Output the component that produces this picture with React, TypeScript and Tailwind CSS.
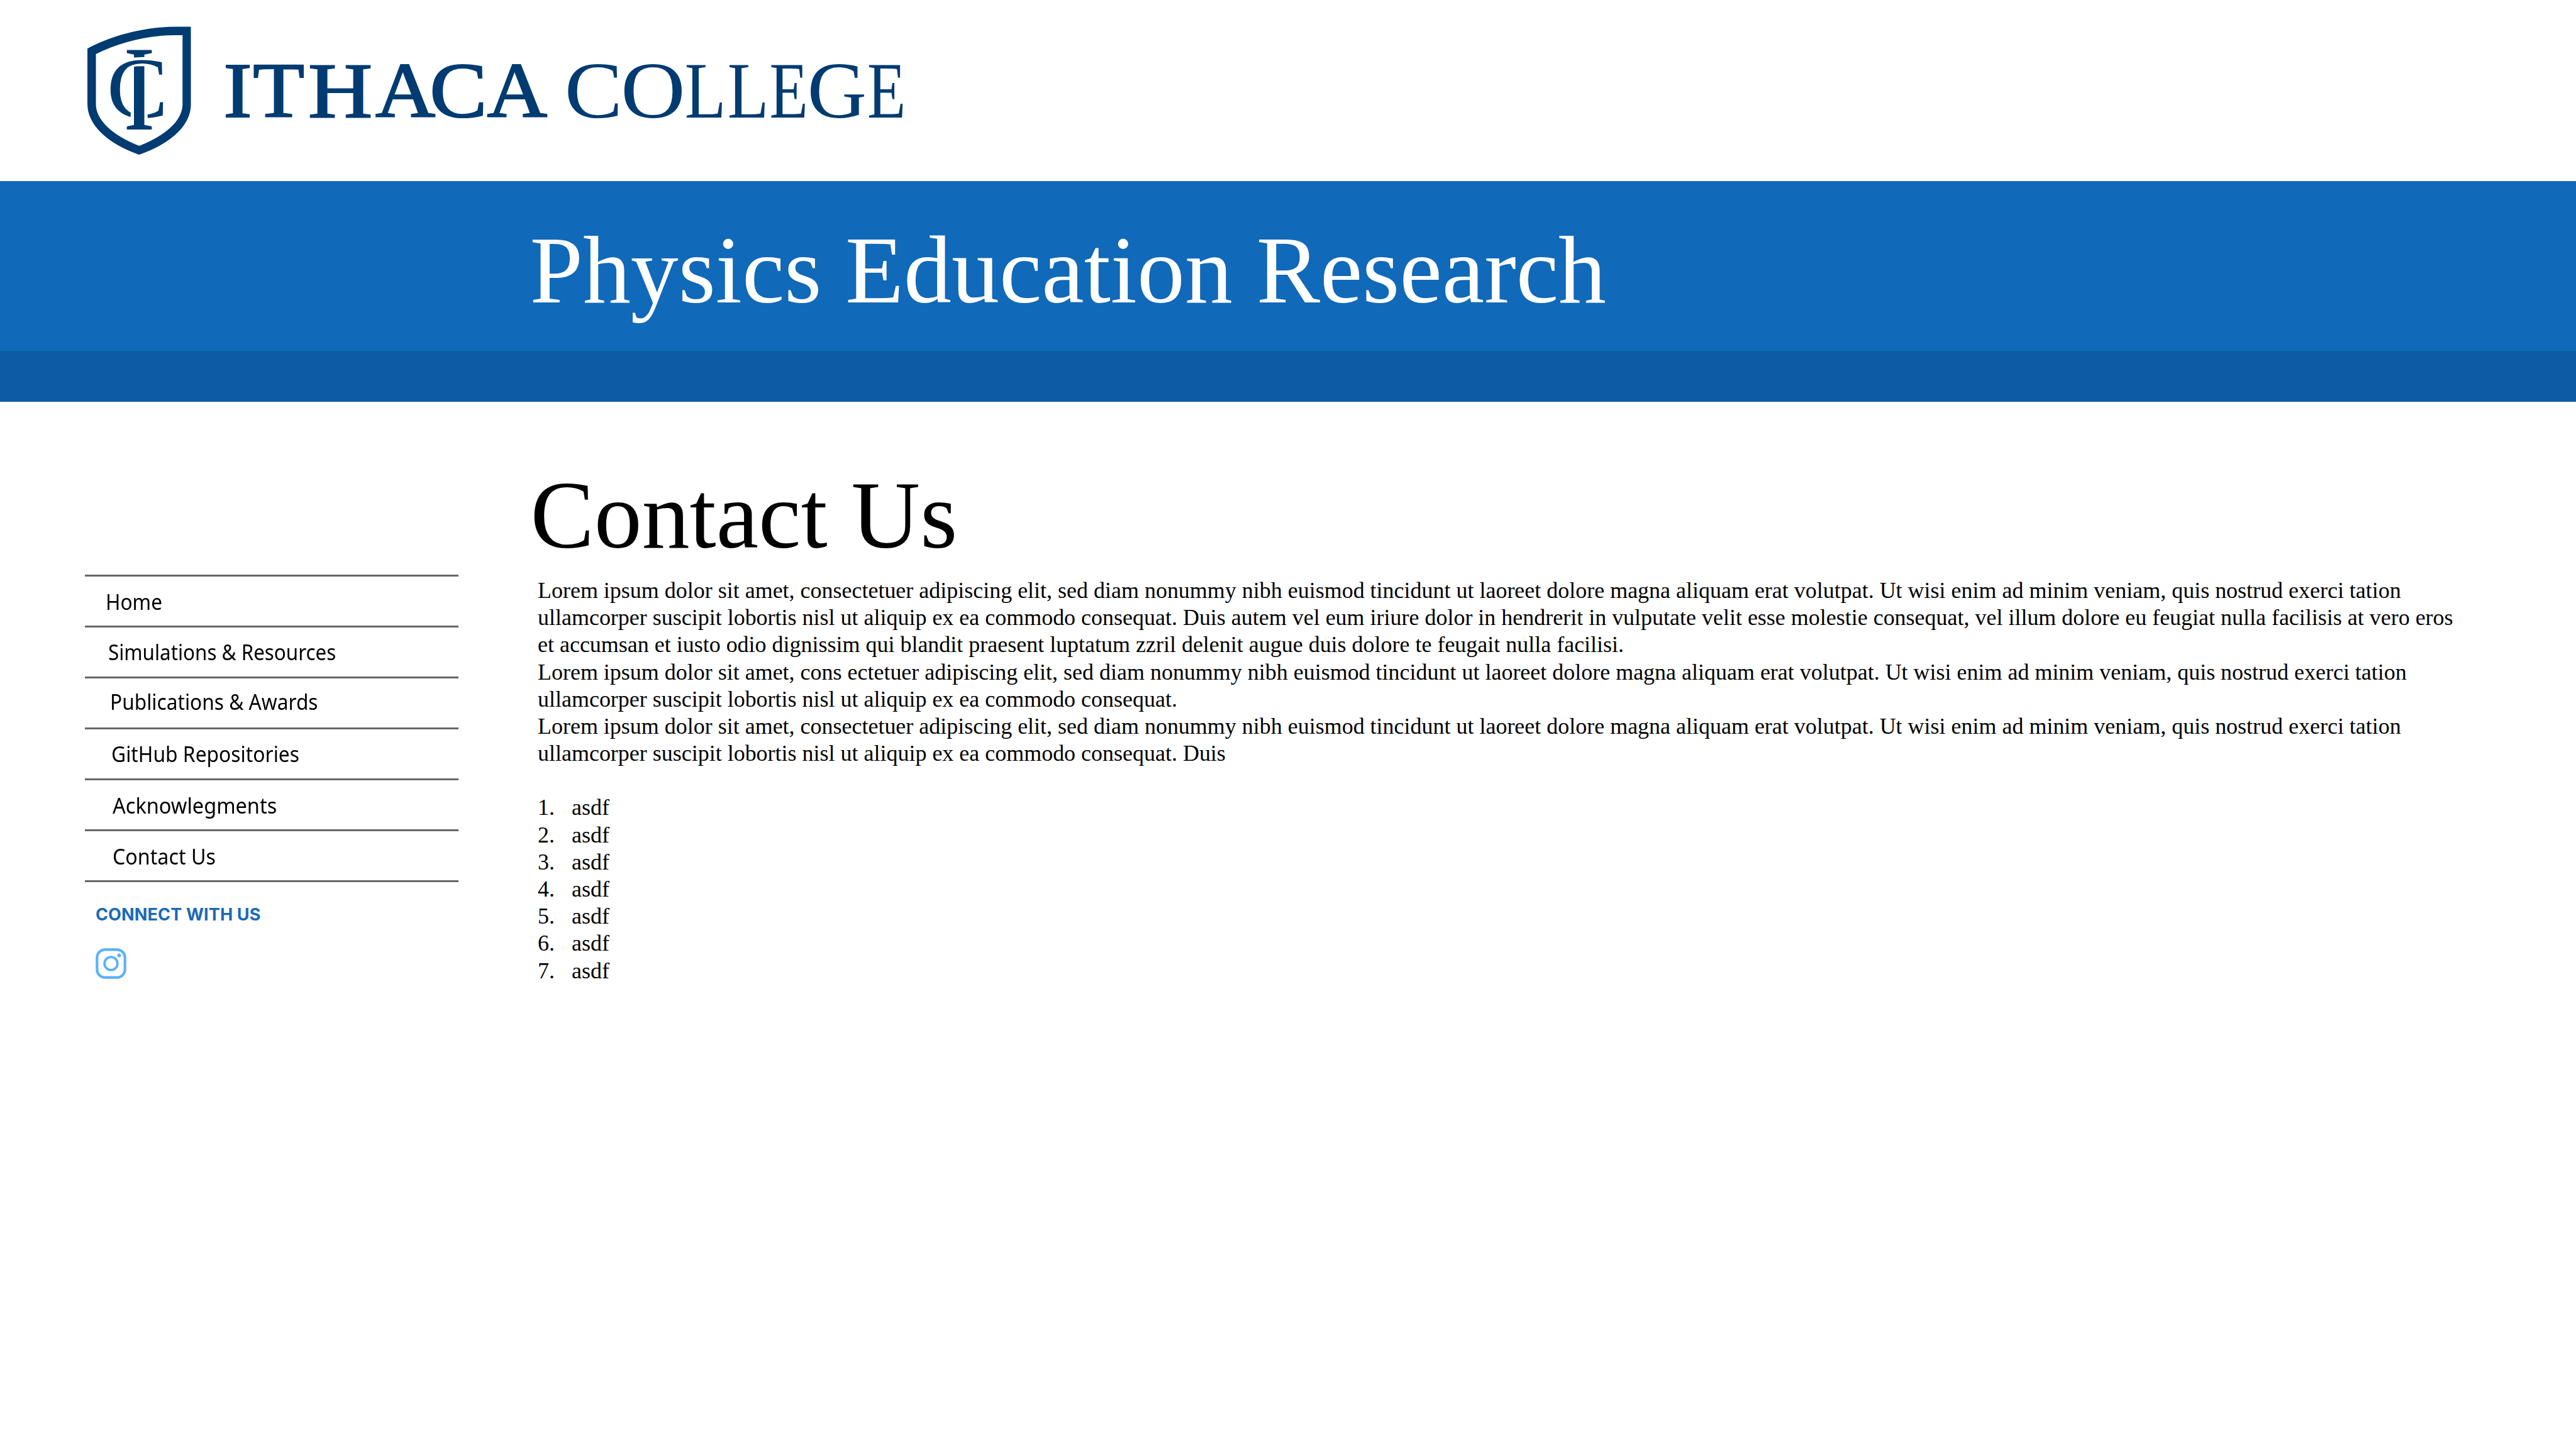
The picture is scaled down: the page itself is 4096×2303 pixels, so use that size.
const NAVY = '#003b71';

type Glyph = { ch: string; left: number; right: number };

// Advance, left bearing and drawn width of each capital, in em.
const METRICS: Record<string, [number, number, number]> = {
  I: [0.333, 0.0387, 0.2635],
  T: [0.611, 0.017, 0.583],
  H: [0.722, 0.025, 0.672],
  A: [0.722, 0.007, 0.711],
  C: [0.667, 0.0425, 0.567],
  O: [0.722, 0.04, 0.642],
  L: [0.611, 0.029, 0.5225],
  E: [0.611, 0.032, 0.5286],
  G: [0.722, 0.039, 0.657],
};

const ITHACA: Glyph[] = [
  { ch: 'I', left: 479.3, right: 530.2 },
  { ch: 'T', left: 537.9, right: 645 },
  { ch: 'H', left: 656.7, right: 786.6 },
  { ch: 'A', left: 795.8, right: 923.8 },
  { ch: 'C', left: 917.5, right: 1024.1 },
  { ch: 'A', left: 1032.8, right: 1161.3 },
];

const COLLEGE: Glyph[] = [
  { ch: 'C', left: 1205.4, right: 1310 },
  { ch: 'O', left: 1324.1, right: 1446 },
  { ch: 'L', left: 1456.4, right: 1531.2 },
  { ch: 'L', left: 1546.9, right: 1621.7 },
  { ch: 'E', left: 1636.3, right: 1707 },
  { ch: 'G', left: 1719, right: 1833.5 },
  { ch: 'E', left: 1843.5, right: 1914.1 },
];

function Word({ glyphs, size, stroke, y }: { glyphs: Glyph[]; size: number; stroke: number; y: number }) {
  return (
    <text
      y={y}
      fontSize={size}
      fill={NAVY}
      stroke={NAVY}
      strokeWidth={stroke}
      fontFamily='"Liberation Serif", serif'
    >
      {glyphs.map((g, i) => {
        const [adv, lsb, ink] = METRICS[g.ch];
        const k = (g.right - g.left - stroke) / ink;
        return (
          <tspan
            key={i}
            x={g.left + stroke / 2 - lsb * k}
            textLength={adv * k}
            lengthAdjust="spacingAndGlyphs"
          >
            {g.ch}
          </tspan>
        );
      })}
    </text>
  );
}

function Shield() {
  return (
    <svg viewBox="0 0 840 960" className="h-[240px] w-[210px] shrink-0" fontFamily='"Liberation Serif", serif'>
      <defs>
        <mask id="under-arc" maskUnits="userSpaceOnUse" x="0" y="0" width="840" height="960">
          <rect width="840" height="960" fill="white" />
          <path d="M350 306Q405 298 460 301" stroke="black" strokeWidth="58" fill="none" />
        </mask>
        <mask id="behind-stem" maskUnits="userSpaceOnUse" x="0" y="0" width="840" height="960">
          <rect width="840" height="960" fill="white" />
          <rect x="351" y="500" width="108" height="200" fill="black" />
        </mask>
      </defs>
      <path
        fill={NAVY}
        fillRule="evenodd"
        d="M76 217C230 135 440 76 650 78H734V572C734 705 610 820 405 892C200 820 76 700 76 570ZM130 252C270 180 460 130 640 132H681V570C681 672 580 768 405 836C235 768 130 672 130 570Z"
      />
      <g mask="url(#under-arc)">
        <rect x="372" y="240" width="66" height="475" fill={NAVY} />
        <text x="305" y="730" fontSize="774" textLength="201.5" lengthAdjust="spacingAndGlyphs" fill={NAVY}>
          I
        </text>
      </g>
      <g mask="url(#behind-stem)">
        <text x="198.5" y="655" fontSize="554" textLength="390" lengthAdjust="spacingAndGlyphs" fill={NAVY}>
          C
        </text>
      </g>
    </svg>
  );
}

const NAV = [
  { label: 'Home', pad: 'pl-[33px] pt-[18px]', fit: 'scale-x-[0.925]' },
  { label: 'Simulations & Resources', pad: 'pl-[37px] pt-[17px]', fit: 'scale-x-[0.917]' },
  { label: 'Publications & Awards', pad: 'pl-[40px] pt-[15px]', fit: 'scale-x-[0.926]' },
  { label: 'GitHub Repositories', pad: 'pl-[41.5px] pt-[17px]', fit: 'scale-x-[0.93]' },
  { label: 'Acknowlegments', pad: 'pl-[44px] pt-[18px]', fit: 'scale-x-[0.951]' },
  { label: 'Contact Us', pad: 'pl-[43.5px] pt-[18px]', fit: 'scale-x-[0.942]' },
];

const LINES = [
  'Lorem ipsum dolor sit amet, consectetuer adipiscing elit, sed diam nonummy nibh euismod tincidunt ut laoreet dolore magna aliquam erat volutpat. Ut wisi enim ad minim veniam, quis nostrud exerci tation',
  'ullamcorper suscipit lobortis nisl ut aliquip ex ea commodo consequat. Duis autem vel eum iriure dolor in hendrerit in vulputate velit esse molestie consequat, vel illum dolore eu feugiat nulla facilisis at vero eros',
  'et accumsan et iusto odio dignissim qui blandit praesent luptatum zzril delenit augue duis dolore te feugait nulla facilisi.',
  'Lorem ipsum dolor sit amet, cons ectetuer adipiscing elit, sed diam nonummy nibh euismod tincidunt ut laoreet dolore magna aliquam erat volutpat. Ut wisi enim ad minim veniam, quis nostrud exerci tation',
  'ullamcorper suscipit lobortis nisl ut aliquip ex ea commodo consequat.',
  'Lorem ipsum dolor sit amet, consectetuer adipiscing elit, sed diam nonummy nibh euismod tincidunt ut laoreet dolore magna aliquam erat volutpat. Ut wisi enim ad minim veniam, quis nostrud exerci tation',
  'ullamcorper suscipit lobortis nisl ut aliquip ex ea commodo consequat. Duis',
];

export default function App() {
  return (
    <div className="h-[2303px] w-[4096px] overflow-hidden bg-white font-['Liberation_Serif',serif] text-black">
      <header className="flex h-[288px] items-start pl-[120px] pt-[22.5px]">
        <Shield />
        <svg viewBox="440 30 1600 320" className="h-[239.9px] w-[1199.4px] shrink-0">
          <Word glyphs={ITHACA} size={166} stroke={3} y={247} />
          <Word glyphs={COLLEGE} size={170} stroke={0} y={248.5} />
        </svg>
      </header>

      <div className="h-[270px] bg-[#1069b9] pl-[842.5px] pt-[66px]">
        <h1 className="whitespace-nowrap text-[151.8px] leading-[152px] text-white">Physics Education Research</h1>
      </div>
      <div className="h-[81px] bg-[#0d5ba5]" />

      <main className="flex">
        <aside className="w-[843.5px] shrink-0 pl-[135px] pt-[275px]">
          <nav className="w-[594px] border-b-[3px] border-[#666666] font-['Noto_Sans',sans-serif]">
            {NAV.map((n) => (
              <div key={n.label} className="h-[81px] border-t-[3px] border-[#666666]">
                <div className={n.pad}>
                  <a className={`inline-block origin-left whitespace-nowrap text-[34.2px] leading-[44px] ${n.fit}`}>
                    {n.label}
                  </a>
                </div>
              </div>
            ))}
          </nav>
          <div className="pl-[17px] pt-[36px]">
            <div className="whitespace-nowrap font-['Inter',sans-serif] text-[27px] font-bold leading-[32px] tracking-[0.15px] text-[#1a69b9]">
              CONNECT WITH US
            </div>
            <svg viewBox="0 0 64 64" className="mt-[37px] h-[49px] w-[49px]" fill="none" stroke="#5bb0ff">
              <rect x="3" y="3" width="58" height="58" rx="17" strokeWidth="5.5" />
              <circle cx="32" cy="32" r="13.5" strokeWidth="5" />
              <circle cx="49" cy="15" r="3.8" fill="#5bb0ff" stroke="none" />
            </svg>
          </div>
        </aside>

        <article className="pt-[105px]">
          <h2 className="whitespace-nowrap text-[151.8px] leading-[152px]">Contact Us</h2>
          <div className="whitespace-nowrap pl-[11.5px] pt-[22px] text-[35.98px] leading-[43.18px]">
            {LINES.map((l, i) => (
              <p key={i}>{l}</p>
            ))}
            <ol className="pt-[43.18px]">
              {[1, 2, 3, 4, 5, 6, 7].map((n) => (
                <li key={n} className="flex">
                  <span className="w-[54px]">{n}.</span>
                  <span>asdf</span>
                </li>
              ))}
            </ol>
          </div>
        </article>
      </main>
    </div>
  );
}
